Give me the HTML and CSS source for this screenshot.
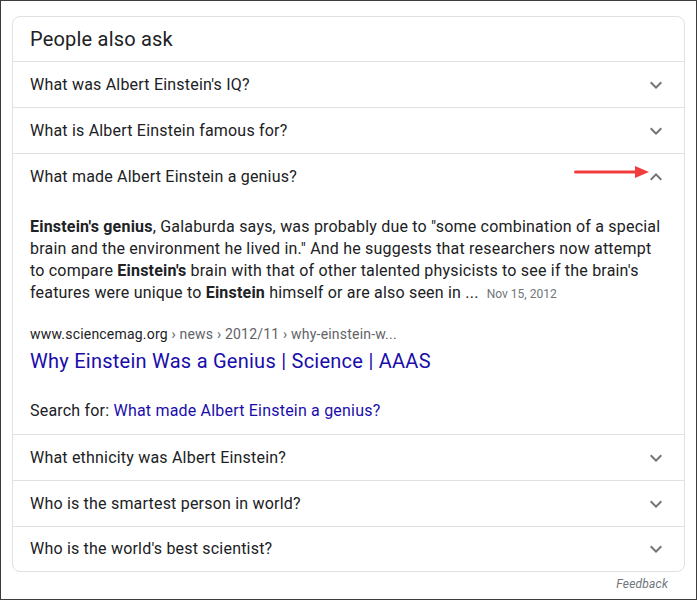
FILE: index.html
```html
<!DOCTYPE html>
<html>
<head>
<meta charset="utf-8">
<link rel="stylesheet" href="styles.css">
</head>
<body>
<div class="frame">
  <div class="card">
    <div class="header">People also ask</div>
    <div class="row">
      <span class="q">What was Albert Einstein's IQ?</span>
      <svg class="chev" viewBox="0 0 24 24" width="24" height="24"><path d="M16.59 8.59L12 13.17 7.41 8.59 6 10l6 6 6-6z"/></svg>
    </div>
    <div class="row">
      <span class="q">What is Albert Einstein famous for?</span>
      <svg class="chev" viewBox="0 0 24 24" width="24" height="24"><path d="M16.59 8.59L12 13.17 7.41 8.59 6 10l6 6 6-6z"/></svg>
    </div>
    <div class="section">
      <div class="row open">
        <span class="q">What made Albert Einstein a genius?</span>
        <svg class="arrow" viewBox="0 0 76 14" width="76" height="14"><line x1="1.5" y1="7" x2="63" y2="7" stroke="#f03c3c" stroke-width="3" stroke-linecap="round"/><polygon points="61,1 75,7 61,13" fill="#f03c3c"/></svg>
        <svg class="chev" viewBox="0 0 24 24" width="24" height="24"><path d="M7.41 15.41L12 10.83l4.59 4.58L18 14l-6-6-6 6z"/></svg>
      </div>
      <div class="answer">
        <p class="para"><b>Einstein's genius</b>, Galaburda says, was probably due to "some combination of a special brain and the environment he lived in." And he suggests that researchers now attempt to compare <b>Einstein's</b> brain with that of other talented physicists to see if the brain's features were unique to <b>Einstein</b> himself or are also seen in ... <span class="date">Nov 15, 2012</span></p>
        <div class="url">www.sciencemag.org<span class="crumbs"> › news › 2012/11 › why-einstein-w...</span></div>
        <a class="title" href="#">Why Einstein Was a Genius | Science | AAAS</a>
        <div class="search">Search for: <a href="#">What made Albert Einstein a genius?</a></div>
      </div>
    </div>
    <div class="row">
      <span class="q">What ethnicity was Albert Einstein?</span>
      <svg class="chev" viewBox="0 0 24 24" width="24" height="24"><path d="M16.59 8.59L12 13.17 7.41 8.59 6 10l6 6 6-6z"/></svg>
    </div>
    <div class="row">
      <span class="q">Who is the smartest person in world?</span>
      <svg class="chev" viewBox="0 0 24 24" width="24" height="24"><path d="M16.59 8.59L12 13.17 7.41 8.59 6 10l6 6 6-6z"/></svg>
    </div>
    <div class="row last">
      <span class="q">Who is the world's best scientist?</span>
      <svg class="chev" viewBox="0 0 24 24" width="24" height="24"><path d="M16.59 8.59L12 13.17 7.41 8.59 6 10l6 6 6-6z"/></svg>
    </div>
  </div>
  <div class="feedback">Feedback</div>
</div>
</body>
</html>
```
FILE: styles.css
```css
html, body {
  margin: 0;
  padding: 0;
  background: #fff;
}
body {
  font-family: Roboto, "Liberation Sans", Arial, sans-serif;
  color: #202124;
  letter-spacing: 0.2px;
}
.frame {
  width: 697px;
  height: 600px;
  box-sizing: border-box;
  border: 1px solid #3c3c3c;
  padding: 15px 11px 0 11px;
}
.card {
  border: 1px solid #dfe1e5;
  border-radius: 8px;
  overflow: hidden;
}
.header {
  height: 44px;
  padding: 0 16px 0 17px;
  display: flex;
  align-items: center;
  font-size: 20px;
  line-height: 26px;
  color: #202124;
}
.row {
  position: relative;
  height: 45px;
  border-top: 1px solid #dfe1e5;
  padding: 0 16px 0 17px;
  display: flex;
  align-items: center;
  justify-content: space-between;
}
.row.last {
  height: 44px;
}
.q {
  font-size: 16px;
  line-height: 22px;
}
.chev {
  fill: #70757a;
  flex: none;
}
.arrow {
  position: absolute;
  left: 561px;
  top: 11px;
}
.answer {
  padding: 17px 16px 12px 17px;
}
.para {
  margin: 0;
  font-size: 16px;
  line-height: 22px;
}
.para b {
  font-weight: bold;
}
.date {
  font-size: 12px;
  color: #70757a;
  margin-left: 4px;
  letter-spacing: 0;
}
.url {
  margin-top: 19px;
  font-size: 14px;
  line-height: 20px;
  color: #202124;
}
.crumbs {
  color: #5f6368;
}
.title {
  display: block;
  margin-top: 4px;
  font-size: 20px;
  line-height: 26px;
  letter-spacing: 0.25px;
  color: #1a0dab;
  text-decoration: none;
}
.search {
  margin-top: 26px;
  font-size: 16px;
  line-height: 22px;
}
.search a {
  color: #1a0dab;
  text-decoration: none;
}
.feedback {
  margin-top: 4px;
  padding-right: 17px;
  text-align: right;
  font-size: 12px;
  line-height: 16px;
  font-style: italic;
  color: #70757a;
}
```
